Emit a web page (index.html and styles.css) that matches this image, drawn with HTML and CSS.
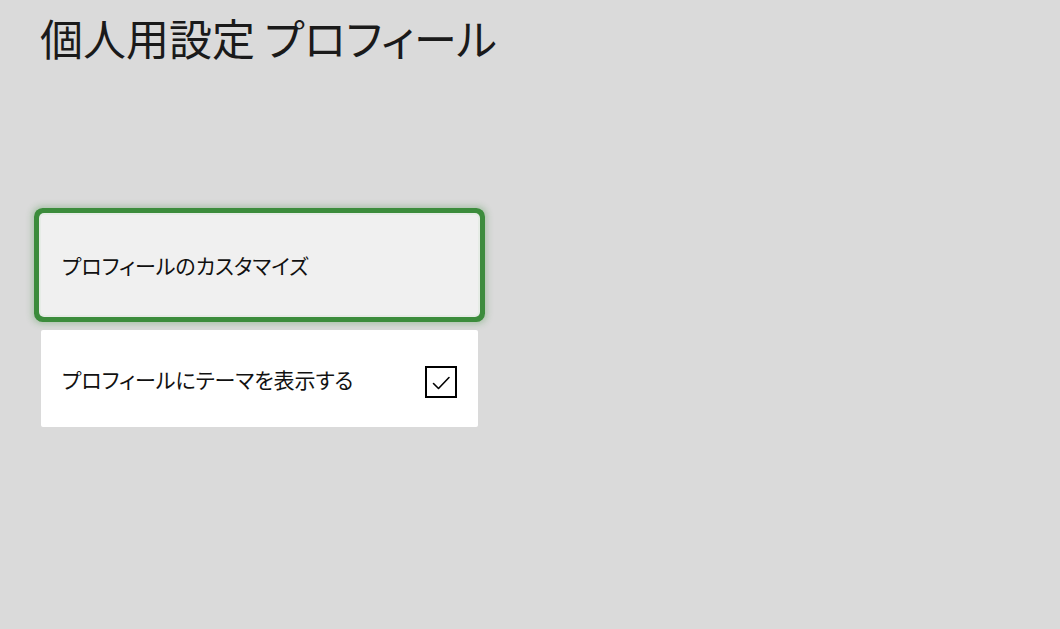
FILE: index.html
```html
<!DOCTYPE html>
<html lang="ja">
<head>
<meta charset="utf-8">
<link rel="stylesheet" href="styles.css">
</head>
<body>
<main class="page">
  <h1 class="title">個人用設定 プロフィール</h1>
  <div class="list">
    <div class="item item-focused">
      <span class="label">プロフィールのカスタマイズ</span>
    </div>
    <div class="item item-plain">
      <span class="label">プロフィールにテーマを表示する</span>
      <span class="check">
        <svg width="32" height="32" viewBox="0 0 32 32">
          <rect x="1" y="1" width="30" height="30" fill="none" stroke="#000" stroke-width="2"/>
          <path d="M8.5 17.5 L13.5 22.5 L24 11.5" fill="none" stroke="#000" stroke-width="1.6" stroke-linecap="round" stroke-linejoin="round"/>
        </svg>
      </span>
    </div>
  </div>
</main>
</body>
</html>
```

FILE: styles.css
```css
html, body {
  margin: 0;
  padding: 0;
  background: #dadada;
}
body {
  width: 1060px;
  height: 629px;
  overflow: hidden;
  font-family: "Noto Sans CJK JP", "Noto Sans", sans-serif;
  color: #111;
  font-feature-settings: "palt";
}
.page {
  padding: 6px 0 0 40px;
}
.title {
  margin: 0;
  font-size: 43px;
  font-weight: 400;
  line-height: 62px;
  color: #1a1a1a;
}
.list {
  margin-top: 147px;
  margin-left: 1px;
  display: flex;
  flex-direction: column;
  gap: 15px;
  width: 437px;
}
.item {
  box-sizing: border-box;
  display: flex;
  align-items: center;
  justify-content: space-between;
  padding: 0 21px;
}
.item-focused {
  height: 100px;
  background: #f0f0f0;
  border-radius: 3px;
  box-shadow: 0 0 0 2px #e6ece6, 0 0 0 7px #3c8c3c, 0 0 6px 9px rgba(60, 140, 60, 0.3);
}
.item-plain {
  height: 97px;
  background: #ffffff;
  border-radius: 2px;
}
.label {
  font-size: 21px;
  line-height: 30px;
  color: #111;
}
.check {
  display: flex;
  width: 32px;
  height: 32px;
  margin-top: 6px;
}
```
